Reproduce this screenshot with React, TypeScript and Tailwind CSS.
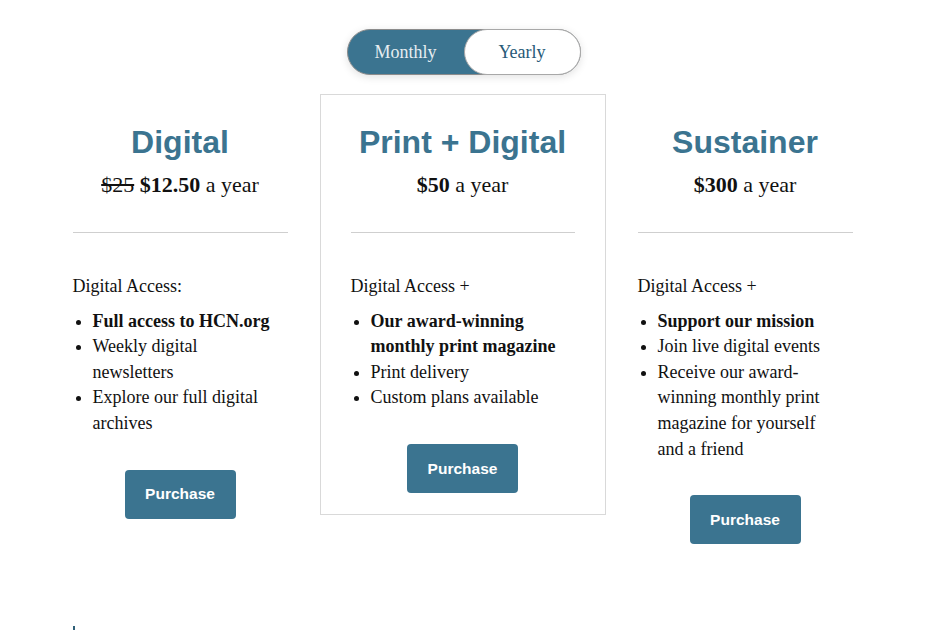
import React from "react";

const serif = { fontFamily: '"Liberation Serif", "Times New Roman", serif' };
const sans = { fontFamily: '"Liberation Sans", Arial, sans-serif' };

function Column({
  title,
  price,
  lead,
  items,
  boxed,
}: {
  title: string;
  price: React.ReactNode;
  lead: string;
  items: React.ReactNode[];
  boxed?: boolean;
}) {
  return (
    <div
      className={
        boxed
          ? "w-[286px] border border-[#d9d9d9] px-[30px] pt-[27px] pb-[21px] flex flex-col"
          : "w-[215px] pt-[28px] flex flex-col"
      }
    >
      <h2
        className="text-center text-[32px] leading-[40px] font-bold text-[#3b7490]"
        style={sans}
      >
        {title}
      </h2>
      <div className="mt-[8px] text-center text-[22px] leading-[30px] text-[#111]" style={serif}>
        {price}
      </div>
      <div className="mt-[32px] h-px bg-[#cfcfcf]" />
      <div className="mt-[41px] text-[18px] leading-[25.6px] text-[#111]" style={serif}>
        {lead}
      </div>
      <ul
        className="mt-[9px] list-disc pl-5 pr-3 text-[18px] leading-[25.6px] text-[#111]"
        style={serif}
      >
        {items.map((it, i) => (
          <li key={i}>{it}</li>
        ))}
      </ul>
      <div className="mt-[33px] flex justify-center">
        <button
          className="w-[111px] h-[49px] rounded-[4px] bg-[#3b7490] text-white text-[15.5px] font-bold"
          style={sans}
        >
          Purchase
        </button>
      </div>
    </div>
  );
}

export default function App() {
  return (
    <div className="min-h-[630px] bg-white flex flex-col items-center pt-[29px]">
      <div
        className="w-[234px] h-[46px] rounded-full bg-[#3b7490] border border-[#8c8c8c] flex shadow-[0_2px_8px_rgba(0,0,0,0.12)]"
        style={serif}
      >
        <div className="flex-1 flex items-center justify-center text-[18px] text-[#e6edf1]">
          Monthly
        </div>
        <div className="w-[117px] rounded-full bg-white border border-[#a8a8a8] -my-px -mr-px h-[46px] flex items-center justify-center text-[18px] text-[#275a78]">
          Yearly
        </div>
      </div>

      <div className="mt-[19px] w-[780px] flex items-start justify-between -translate-x-px">
        <Column
          title="Digital"
          price={
            <>
              <span className="line-through">$25</span> <b>$12.50</b> a year
            </>
          }
          lead="Digital Access:"
          items={[
            <b key="a">Full access to HCN.org</b>,
            "Weekly digital newsletters",
            "Explore our full digital archives",
          ]}
        />
        <Column
          boxed
          title="Print + Digital"
          price={
            <>
              <b>$50</b> a year
            </>
          }
          lead="Digital Access +"
          items={[
            <b key="a">Our award-winning monthly print magazine</b>,
            "Print delivery",
            "Custom plans available",
          ]}
        />
        <Column
          title="Sustainer"
          price={
            <>
              <b>$300</b> a year
            </>
          }
          lead="Digital Access +"
          items={[
            <b key="a">Support our mission</b>,
            "Join live digital events",
            "Receive our award-winning monthly print magazine for yourself and a friend",
          ]}
        />
      </div>

      <div className="w-[780px] mt-[82px] -translate-x-px">
        <div className="w-[2px] h-[4px] bg-[#2f6078]" />
      </div>
    </div>
  );
}
